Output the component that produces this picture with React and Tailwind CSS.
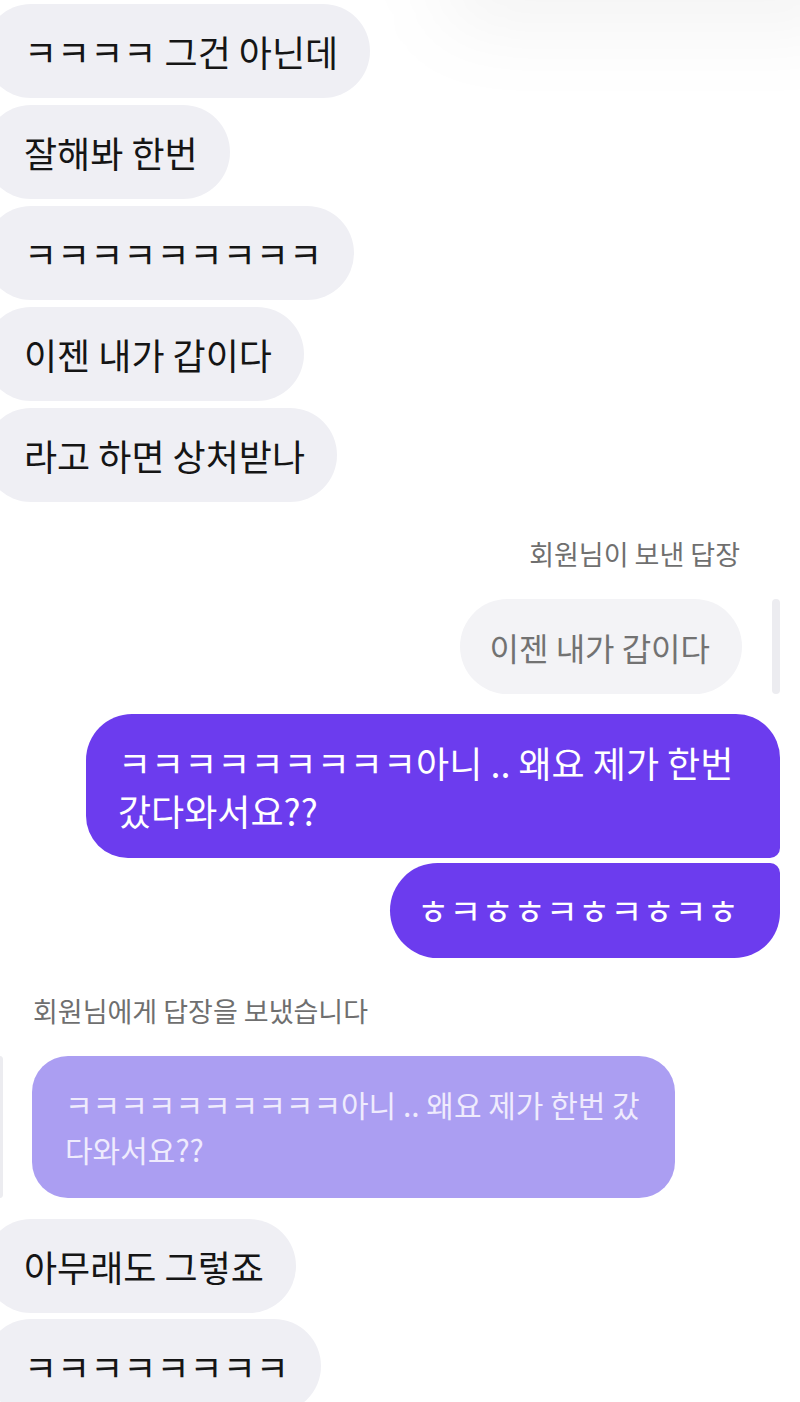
export default function App() {
  const leftBubble =
    "self-start -ml-4 pl-10 pr-8 h-[94px] flex items-center rounded-full bg-[#efeff4] text-[36px] text-[#151515] whitespace-nowrap";
  return (
    <div className="relative w-[800px] h-[1402px] overflow-hidden bg-white font-['Noto_Sans_CJK_KR',sans-serif]">
      <div className="pointer-events-none absolute -top-[55px] right-[-60px] w-[420px] h-[80px] rounded-full bg-black/[0.05] blur-2xl" />
      <div className="flex flex-col pt-1">
        <div className={leftBubble}>ㅋㅋㅋㅋ 그건 아닌데</div>
        <div className={leftBubble + " mt-[7px]"}>잘해봐 한번</div>
        <div className={leftBubble + " mt-[7px]"}>ㅋㅋㅋㅋㅋㅋㅋㅋㅋ</div>
        <div className={leftBubble + " mt-[7px]"}>이젠 내가 갑이다</div>
        <div className={leftBubble + " mt-[7px]"}>라고 하면 상처받나</div>

        <div className="self-end mr-[60px] mt-[37px] text-[27px] leading-[30px] text-[#6f6f6f]">
          회원님이 보낸 답장
        </div>

        <div className="self-end mt-[30px] mr-5 flex items-stretch gap-[30px]">
          <div className="h-[95px] pl-[30px] pr-8 flex items-center rounded-full bg-[#f3f3f6] text-[32px] text-[#727272] whitespace-nowrap">
            이젠 내가 갑이다
          </div>
          <div className="w-2 rounded-full bg-[#ececf0]" />
        </div>

        <div className="self-end mt-5 mr-5 w-[694px] pl-[32px] py-[24px] rounded-tl-[46px] rounded-tr-[44px] rounded-bl-[42px] rounded-br-[10px] bg-[#6c3cee] text-white text-[36px] leading-[48px] whitespace-nowrap">
          <div>ㅋㅋㅋㅋㅋㅋㅋㅋㅋ아니 .. 왜요 제가 한번</div>
          <div>갔다와서요??</div>
        </div>

        <div className="self-end mt-[5px] mr-5 w-[390px] h-[95px] pl-[27px] flex items-center rounded-tl-[48px] rounded-bl-[48px] rounded-tr-[10px] rounded-br-[46px] bg-[#6c3cee] text-white text-[35px] whitespace-nowrap">
          ㅎㅋㅎㅎㅋㅎㅋㅎㅋㅎ
        </div>

        <div className="self-start ml-[33px] mt-[38px] text-[27px] leading-[30px] text-[#6f6f6f]">
          회원님에게 답장을 보냈습니다
        </div>

        <div className="self-start mt-[30px] -ml-1 flex items-stretch gap-[29px]">
          <div className="w-[7px] rounded-full bg-[#ececf0]" />
          <div className="w-[643px] pl-[33px] py-[26px] rounded-[36px] bg-[#ab9ef2] text-[#efebfd] text-[30px] leading-[45px] whitespace-nowrap">
            <div>ㅋㅋㅋㅋㅋㅋㅋㅋㅋㅋ아니 .. 왜요 제가 한번 갔</div>
            <div>다와서요??</div>
          </div>
        </div>

        <div className={leftBubble + " mt-[21px]"}>아무래도 그렇죠</div>
        <div className={leftBubble + " mt-[6px]"}>ㅋㅋㅋㅋㅋㅋㅋㅋ</div>
      </div>
    </div>
  );
}
